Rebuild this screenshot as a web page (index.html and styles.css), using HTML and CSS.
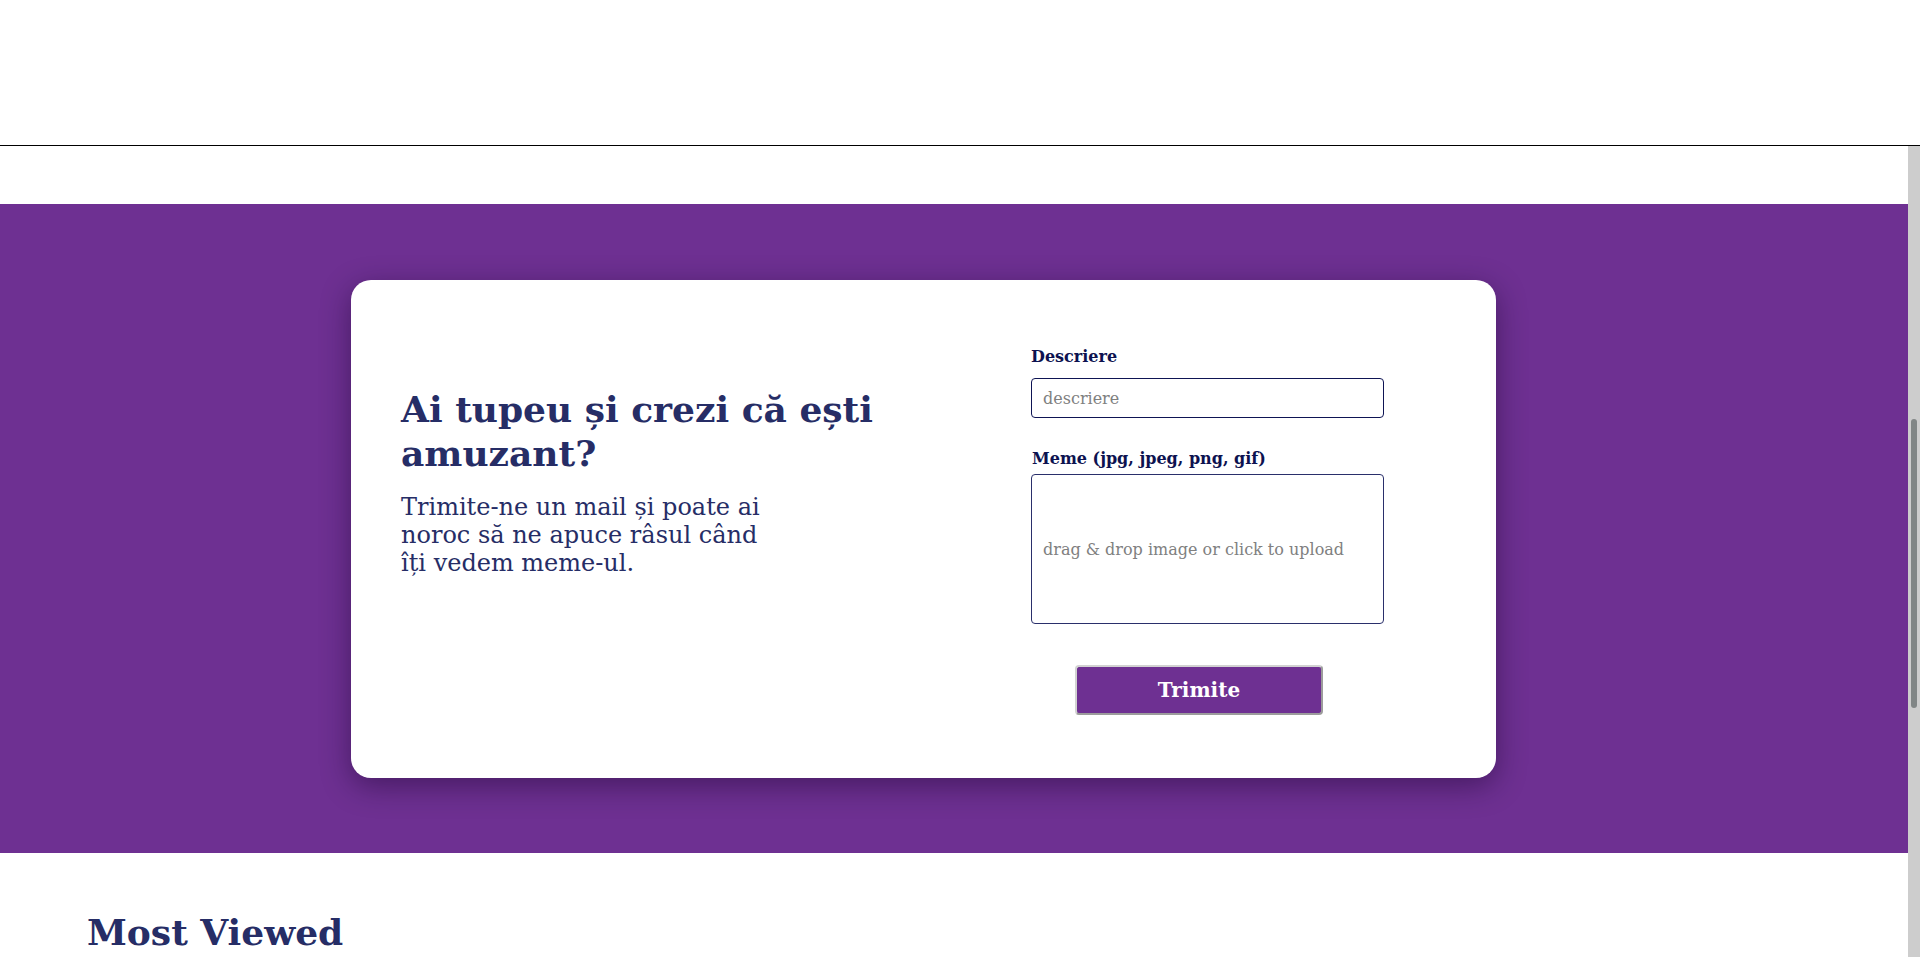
FILE: index.html
```html
<!DOCTYPE html>
<html lang="ro">
<head>
<meta charset="utf-8">
<title>Memes</title>
<link rel="stylesheet" href="styles.css">
</head>
<body>
<header class="site-header"></header>
<div class="viewport">
  <main class="page">
    <section class="submit">
      <div class="submit-card">
        <div class="pitch">
          <h2 class="pitch-title">Ai tupeu și crezi că ești amuzant?</h2>
          <p class="pitch-text">Trimite-ne un mail și poate ai noroc să ne apuce râsul când îți vedem meme-ul.</p>
        </div>
        <form class="meme-form">
          <label class="field-label" for="desc">Descriere</label>
          <input id="desc" class="text-input" type="text" placeholder="descriere">
          <label class="field-label field-label--meme" for="meme">Meme (jpg, jpeg, png, gif)</label>
          <label class="dropzone" for="meme">drag &amp; drop image or click to upload</label>
          <input id="meme" class="file-input" type="file" accept=".jpg,.jpeg,.png,.gif">
          <button class="submit-btn" type="button">Trimite</button>
        </form>
      </div>
    </section>
    <section class="most-viewed">
      <h2 class="section-title">Most Viewed</h2>
    </section>
  </main>
  <div class="scrollbar" aria-hidden="true">
    <div class="scrollbar-thumb"></div>
  </div>
</div>
</body>
</html>
```

FILE: styles.css
```css
html, body {
  margin: 0;
  padding: 0;
  height: 100%;
}

body {
  display: flex;
  flex-direction: column;
  font-family: "DejaVu Serif", serif;
  background: #ffffff;
  overflow: hidden;
}

.site-header {
  flex: none;
  height: 145px;
  background: #ffffff;
  border-bottom: 1px solid #000000;
}

.viewport {
  flex: 1;
  min-height: 0;
  display: flex;
}

.page {
  flex: 1;
  min-width: 0;
  overflow: hidden;
}

.scrollbar {
  flex: none;
  width: 12px;
  background: #cdcdcd;
  padding-top: 273px;
  box-sizing: border-box;
}

.scrollbar-thumb {
  height: 289px;
  margin: 0 3px;
  border-radius: 3px;
  background: #818686;
}

.submit {
  margin-top: 58px;
  background: #6e3092;
  padding: 76px 0 75px;
}

.submit-card {
  box-sizing: border-box;
  width: 1145px;
  margin-left: 351px;
  background: #ffffff;
  border-radius: 20px;
  box-shadow: 0 8px 30px rgba(20, 0, 40, 0.45);
  display: flex;
  gap: 40px;
  padding: 67px 112px 63px 50px;
}

.pitch {
  flex: 1;
  padding-top: 40px;
  color: #262d66;
}

.pitch-title {
  margin: 0;
  font-size: 36px;
  line-height: 44px;
  font-weight: bold;
}

.pitch-text {
  margin: 18px 0 0;
  max-width: 368px;
  font-size: 24px;
  line-height: normal;
}

.meme-form {
  flex: none;
  width: 353px;
  display: flex;
  flex-direction: column;
}

.field-label {
  display: block;
  font-size: 16px;
  font-weight: bold;
  line-height: normal;
  color: #0d1250;
  margin-bottom: 12px;
}

.field-label--meme {
  margin-left: 1px;
  margin-bottom: 6px;
}

.text-input {
  box-sizing: border-box;
  width: 100%;
  height: 40px;
  margin: 0 0 31px;
  padding: 0 11px;
  border: 1px solid #0e1454;
  border-radius: 4px;
  font-family: "DejaVu Serif", serif;
  font-size: 16px;
  color: #222;
  background: #fff;
}

.text-input::placeholder {
  color: #808080;
}

.dropzone {
  box-sizing: border-box;
  display: flex;
  align-items: center;
  height: 150px;
  padding: 0 11px;
  border: 1px solid #2a2f6b;
  border-radius: 4px;
  font-size: 16px;
  color: #808080;
  cursor: pointer;
}

.file-input {
  display: none;
}

.submit-btn {
  align-self: flex-start;
  box-sizing: border-box;
  width: 248px;
  height: 50px;
  margin: 41px 0 0 44px;
  background: #6e3092;
  color: #ffffff;
  font-family: "DejaVu Serif", serif;
  font-size: 20px;
  font-weight: bold;
  border: 2px solid;
  border-color: #d2d2d2 #9c9c9c #9c9c9c #d2d2d2;
  border-radius: 4px;
  cursor: pointer;
}

.most-viewed {
  padding: 57px 87px 0;
}

.section-title {
  margin: 0;
  font-size: 36px;
  line-height: 44px;
  font-weight: bold;
  color: #262d66;
}
```
